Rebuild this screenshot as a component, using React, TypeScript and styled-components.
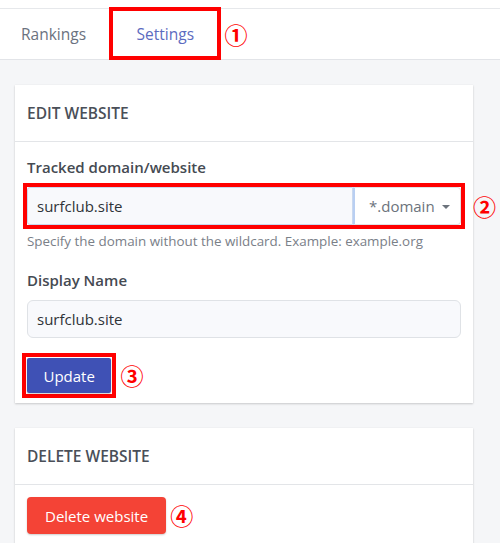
import React from "react";
import styled, { createGlobalStyle } from "styled-components";

const GlobalStyle = createGlobalStyle`
  html, body {
    margin: 0;
    padding: 0;
    background: #f5f6f8;
  }
  body {
    font-family: "Open Sans", "Noto Sans", sans-serif;
    -webkit-font-smoothing: antialiased;
  }
`;

const Page = styled.div`
  width: 500px;
  height: 543px;
  overflow: hidden;
  background: #f5f6f8;
`;

const TopStrip = styled.div`
  height: 8px;
  background: #ffffff;
`;

const TabBar = styled.nav`
  display: flex;
  align-items: center;
  height: 50px;
  background: #ffffff;
  border-top: 1px solid #e6e8eb;
  border-bottom: 1px solid #e2e4e8;
`;

type TabProps = { $active?: boolean; $marked?: boolean };

const Tab = styled.div<TabProps>`
  display: flex;
  align-items: center;
  align-self: stretch;
  padding: 0 24.5px 0 25.5px;
  margin: 0 0 1px;
  font-size: 15.5px;
  color: ${(p) => (p.$active ? "#5c6bc0" : "#6b7280")};
  outline: ${(p) => (p.$marked ? "4px solid #ff0000" : "none")};
  outline-offset: -2px;

  &:first-child {
    padding: 0 25px 0 21px;
  }
`;

const Marker = styled.span<{ $gap?: string }>`
  font-family: "Noto Sans CJK JP", "DejaVu Sans", sans-serif;
  font-size: 23px;
  font-weight: 700;
  line-height: 1;
  color: #ff0000;
  margin-left: ${(p) => p.$gap || "8px"};
`;

const Content = styled.main`
  display: flex;
  flex-direction: column;
  gap: 25px;
  padding: 25px 27px 0 15px;
`;

const Card = styled.section`
  background: #ffffff;
  box-shadow:
    0 1px 2px rgba(0, 0, 0, 0.18),
    0 0 1px rgba(0, 0, 0, 0.06);
`;

const CardHeader = styled.header`
  display: flex;
  align-items: center;
  height: 56px;
  padding: 0 12px;
  border-bottom: 1px solid #e3e5e8;
  font-size: 15.5px;
  font-weight: 600;
  color: #4a4f58;
  text-transform: uppercase;
`;

const CardBody = styled.div<{ $padding?: string }>`
  padding: ${(p) => p.$padding || "14px 12px 10px"};
`;

const Label = styled.label<{ $top?: string }>`
  display: block;
  margin-top: ${(p) => p.$top || "0"};
  margin-bottom: 9px;
  font-size: 15px;
  font-weight: 600;
  line-height: 22px;
  color: #454a52;
`;

const GroupWrap = styled.div`
  position: relative;
`;

const InputGroup = styled.div`
  display: flex;
  height: 38px;
  outline: 4px solid #ff0000;
`;

const TextInput = styled.div<{ $rounded?: boolean }>`
  flex: 1;
  display: flex;
  align-items: center;
  padding: 0 9px;
  font-size: 15px;
  color: #2f3338;
  background: #f8f9fc;
  border: 1px solid ${(p) => (p.$rounded ? "#dfe2e6" : "#c9d8ef")};
  border-radius: ${(p) => (p.$rounded ? "6px" : "3px 0 0 3px")};
  height: 38px;
  box-sizing: border-box;
`;

const Addon = styled.div`
  display: flex;
  align-items: center;
  gap: 7px;
  width: 108px;
  box-sizing: border-box;
  padding: 0 0 0 14px;
  font-size: 15px;
  color: #6c737c;
  background: #ffffff;
  border: 1px solid #dfe2e6;
  border-left: 2px solid #b9cff2;
  border-radius: 0 4px 4px 0;
`;

const Caret = styled.span`
  width: 0;
  height: 0;
  border-left: 4px solid transparent;
  border-right: 4px solid transparent;
  border-top: 4px solid #6c737c;
  margin-top: 2px;
`;

const SideMarker = styled(Marker)`
  position: absolute;
  top: 8px;
  left: calc(100% + 12px);
  margin: 0;
`;

const Help = styled.p`
  margin: 6px 0 0;
  font-size: 13.4px;
  line-height: 20px;
  color: #7a8088;
`;

const Row = styled.div<{ $top?: string }>`
  display: flex;
  align-items: center;
  margin-top: ${(p) => p.$top || "0"};
`;

const Highlight = styled.span`
  display: inline-flex;
  border: 4px solid #ff0000;
  padding: 1px;
  margin: -5px;
`;

type ButtonProps = { $variant?: "primary" | "danger" };

const Button = styled.button<ButtonProps>`
  height: ${(p) => (p.$variant === "danger" ? "37px" : "35px")};
  padding: 0 ${(p) => (p.$variant === "danger" ? "18px" : "16.5px")};
  font-family: inherit;
  font-size: 15px;
  color: #ffffff;
  border: none;
  border-radius: ${(p) => (p.$variant === "danger" ? "4px" : "2px")};
  background: ${(p) => (p.$variant === "danger" ? "#f44336" : "#3f51b5")};
  box-shadow: 0 1px 2px rgba(0, 0, 0, 0.2);
`;

export default function App() {
  return (
    <Page>
      <GlobalStyle />
      <TopStrip />
      <TabBar>
        <Tab>Rankings</Tab>
        <Tab $active $marked>
          Settings
        </Tab>
        <Marker $gap="6px">①</Marker>
      </TabBar>
      <Content>
        <Card>
          <CardHeader>Edit Website</CardHeader>
          <CardBody>
            <Label>Tracked domain/website</Label>
            <GroupWrap>
              <InputGroup>
                <TextInput>surfclub.site</TextInput>
                <Addon>
                  *.domain <Caret />
                </Addon>
              </InputGroup>
              <SideMarker>②</SideMarker>
            </GroupWrap>
            <Help>
              Specify the domain without the wildcard. Example: example.org
            </Help>
            <Label $top="18px">Display Name</Label>
            <TextInput $rounded>surfclub.site</TextInput>
            <Row $top="20px">
              <Highlight>
                <Button $variant="primary">Update</Button>
              </Highlight>
              <Marker $gap="9px">③</Marker>
            </Row>
          </CardBody>
        </Card>
        <Card>
          <CardHeader>Delete Website</CardHeader>
          <CardBody $padding="12px 12px 10px">
            <Row>
              <Button $variant="danger">Delete website</Button>
              <Marker $gap="4px">④</Marker>
            </Row>
          </CardBody>
        </Card>
      </Content>
    </Page>
  );
}
